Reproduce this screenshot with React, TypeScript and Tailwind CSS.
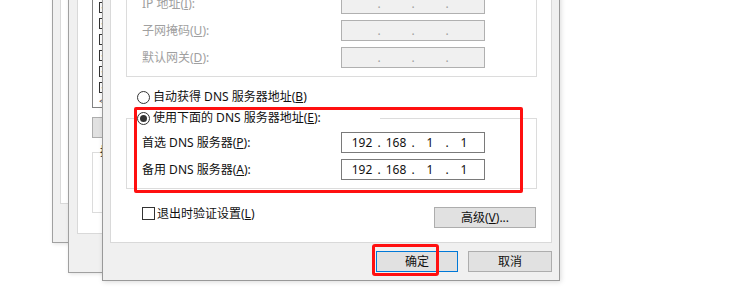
import React from 'react';

// Underlined access key letter, as in Windows dialogs
const Key = ({ k }: { k: string }) => <span className="underline underline-offset-[1px]">{k}</span>;

const Radio = ({ checked }: { checked?: boolean }) => (
  <span className="flex h-[13px] w-[13px] shrink-0 items-center justify-center rounded-full border border-[#333] bg-white">
    {checked && <span className="h-[7px] w-[7px] rounded-full bg-[#333]" />}
  </span>
);

const IpBox = ({ value, disabled }: { value?: string[]; disabled?: boolean }) => (
  <div
    className={`flex h-[21px] w-[144px] items-center border px-[5px] text-[12px] leading-[16px] ${
      disabled ? 'border-[#b0b0b0] bg-[#f0f0f0] text-[#a0a0a0]' : 'border-[#7a7a7a] bg-white text-[#111]'
    }`}
  >
    {[0, 1, 2, 3].map(i => (
      <React.Fragment key={i}>
        {i > 0 && <span className="w-[4px] text-center">.</span>}
        <span className="w-[30px] text-center">{value ? value[i] : ''}</span>
      </React.Fragment>
    ))}
  </div>
);

const Row = ({ label, value, disabled }: { label: React.ReactNode; value?: string[]; disabled?: boolean }) => (
  <div className="flex items-center">
    <span className={`w-[199px] ${disabled ? 'text-[#a0a0a0]' : ''}`}>{label}</span>
    <IpBox value={value} disabled={disabled} />
  </div>
);

const Button = ({ children, className }: { children?: React.ReactNode; className: string }) => (
  <div className={`flex h-[21px] items-center justify-center border bg-[#e1e1e1] ${className}`}>{children}</div>
);

const dns = ['192', '168', '1', '1'];

export default function App() {
  return (
    <div className="relative h-[289px] w-[747px] overflow-hidden bg-white font-['Noto_Sans','Noto_Sans_CJK_SC',sans-serif] text-[12px] leading-[16px] text-[#111]">
      {/* back window */}
      <div className="absolute left-[52px] top-[-60px] flex h-[303px] w-[220px] flex-col border border-[#a0a0a0] bg-[#f0f0f0] px-[7px] pt-[7px] pb-[38px] shadow-[1px_1px_4px_rgba(0,0,0,0.12)]">
        <div className="flex-1 border border-[#d9d9d9] bg-white" />
      </div>

      {/* middle window: adapter properties */}
      <div className="absolute left-[68px] top-[-60px] flex h-[333px] w-[220px] flex-col border border-[#a0a0a0] bg-[#f0f0f0] pl-[8px] pr-[7px] pt-[7px] pb-[38px] shadow-[1px_1px_4px_rgba(0,0,0,0.12)]">
        <div className="flex flex-1 flex-col border border-[#d9d9d9] bg-white pl-[14px]">
          <div className="mt-[31px] flex h-[128px] w-[180px] flex-col border border-[#828282] pl-[6px] pt-[18px]">
            {[true, true, false, true, true, true].map((c, i) => (
              <div key={i} className="flex h-[16px] items-center">
                <span className="flex h-[11px] w-[11px] items-center justify-center border border-[#333] text-[8px] leading-[8px]">
                  {c ? '✓' : ''}
                </span>
              </div>
            ))}
            <div className="flex h-[12px] items-center text-[10px] leading-[10px] text-[#555]">&lt;</div>
          </div>
          <Button className="mt-[9px] w-[75px] border-[#adadad]" />
          <fieldset className="mt-[6px] w-[180px] border border-[#dcdcdc] px-[7px] pb-[52px]">
            <legend className="h-[16px]">描述</legend>
          </fieldset>
        </div>
      </div>

      {/* front window: IPv4 properties */}
      <div className="absolute left-[102px] top-[-60px] flex w-[458px] flex-col border border-[#999] bg-[#f0f0f0] px-[7px] pt-[7px] pb-[8px] shadow-[1px_1px_5px_rgba(0,0,0,0.15)]">
        <div className="flex flex-col border border-[#d9d9d9] bg-white pl-[15px] pr-[14px] pb-[14px]">
          <div className="mt-[29px] border border-[#dcdcdc] pl-[15px] pt-[14px] pb-[8px]">
            <div className="flex flex-col gap-[6px]">
              <Row disabled label={<>IP 地址(<Key k="I" />):</>} />
              <Row disabled label={<>子网掩码(<Key k="U" />):</>} />
              <Row disabled label={<>默认网关(<Key k="D" />):</>} />
            </div>
          </div>

          <div className="ml-[11px] mt-[12px] flex h-[16px] items-center gap-[3px]">
            <Radio />
            <span>自动获得 DNS 服务器地址(<Key k="B" />)</span>
          </div>

          <fieldset className="mt-[5px] border border-[#dcdcdc] px-[10px] pt-[6px] pb-[8px]">
            <legend className="h-[16px] w-[243px]">
              <div className="flex h-[16px] items-center gap-[3px]">
                <Radio checked />
                <span>使用下面的 DNS 服务器地址(<Key k="E" />):</span>
              </div>
            </legend>
            <div className="flex flex-col gap-[6px] pl-[5px]">
              <Row label={<>首选 DNS 服务器(<Key k="P" />):</>} value={dns} />
              <Row label={<>备用 DNS 服务器(<Key k="A" />):</>} value={dns} />
            </div>
          </fieldset>

          <div className="mt-[18px] flex items-start justify-between">
            <div className="ml-[16px] flex h-[13px] items-center gap-[2px]">
              <span className="h-[13px] w-[13px] border border-[#333] bg-white" />
              <span>退出时验证设置(<Key k="L" />)</span>
            </div>
            <Button className="mr-[1px] w-[102px] border-[#adadad]">
              <span>高级(<Key k="V" />)...</span>
            </Button>
          </div>
        </div>

        <div className="mt-[8px] flex justify-end gap-[10px]">
          <Button className="w-[82px] border-[#0078d7]">确定</Button>
          <Button className="w-[84px] border-[#adadad]">取消</Button>
        </div>
      </div>

      {/* red highlight annotations */}
      <div className="absolute left-[134px] top-[107px] h-[86px] w-[389px] rounded-[2px] border-[3px] border-[#ff1010]" />
      <div className="absolute left-[372px] top-[244px] h-[32px] w-[67px] rounded-[3px] border-[3px] border-[#ff1010]" />
    </div>
  );
}
